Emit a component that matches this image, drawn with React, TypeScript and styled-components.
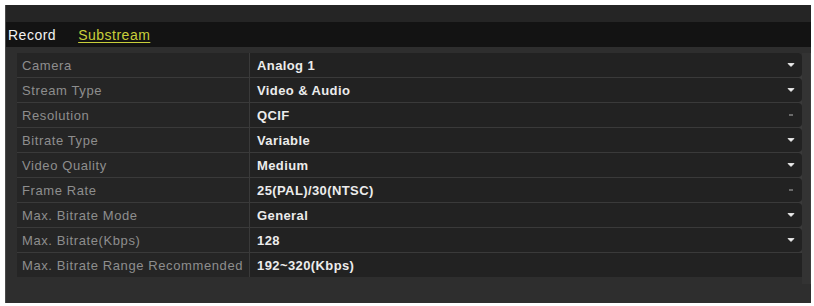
import React from "react";
import styled, { createGlobalStyle } from "styled-components";

const GlobalStyle = createGlobalStyle`
  html, body {
    margin: 0;
    padding: 0;
    background: #ffffff;
  }
  body {
    font-family: "Liberation Sans", Arial, sans-serif;
  }
`;

type Field = {
  label: string;
  value: string;
  arrow?: "on" | "off";
};

const fields: Field[] = [
  { label: "Camera", value: "Analog 1", arrow: "on" },
  { label: "Stream Type", value: "Video & Audio", arrow: "on" },
  { label: "Resolution", value: "QCIF", arrow: "off" },
  { label: "Bitrate Type", value: "Variable", arrow: "on" },
  { label: "Video Quality", value: "Medium", arrow: "on" },
  { label: "Frame Rate", value: "25(PAL)/30(NTSC)", arrow: "off" },
  { label: "Max. Bitrate Mode", value: "General", arrow: "on" },
  { label: "Max. Bitrate(Kbps)", value: "128", arrow: "on" },
  { label: "Max. Bitrate Range Recommended", value: "192~320(Kbps)" },
];

function Arrow({ state }: { state: "on" | "off" }) {
  if (state === "off") {
    return (
      <ArrowBox>
        <svg width="8" height="6" viewBox="0 0 8 6">
          <path d="M2 3h4" stroke="#8a8a8a" strokeWidth="1.4" />
        </svg>
      </ArrowBox>
    );
  }
  return (
    <ArrowBox>
      <svg width="8" height="6" viewBox="0 0 8 6">
        <path d="M1 1.5l3 3 3-3z" fill="#f0f0f0" stroke="#f0f0f0" strokeWidth="0.8" strokeLinejoin="round" />
      </svg>
    </ArrowBox>
  );
}

export default function App() {
  return (
    <>
      <GlobalStyle />
      <Frame>
        <TitleBar />
        <TabBar>
          <Tab>Record</Tab>
          <Tab active>Substream</Tab>
        </TabBar>
        <Panel>
          <Rows>
            {fields.map((f) => (
              <Row key={f.label}>
                <Label>{f.label}</Label>
                <Value select={!!f.arrow}>
                  <span>{f.value}</span>
                  {f.arrow && <Arrow state={f.arrow} />}
                </Value>
              </Row>
            ))}
          </Rows>
          <Gutter />
        </Panel>
      </Frame>
    </>
  );
}

const Frame = styled.div`
  margin: 5px 3px 0 5px;
  height: 298px;
  background: #2f2f2f;
  display: flex;
  flex-direction: column;
  border-left: 1px solid #4a4a4a;
`;

const TitleBar = styled.div`
  height: 17px;
  background: #252525;
`;

const TabBar = styled.div`
  height: 25px;
  background: #131313;
  display: flex;
  align-items: center;
  gap: 22px;
  padding-left: 2px;
`;

const Tab = styled.span<{ active?: boolean }>`
  font-size: 14px;
  color: ${(p) => (p.active ? "#c9cf3a" : "#f2f2f2")};
  text-decoration: ${(p) => (p.active ? "underline" : "none")};
  text-underline-offset: 2px;
  letter-spacing: 0.5px;
`;

const Panel = styled.div`
  flex: 1;
  display: flex;
  padding: 6px 0 0 11px;
  background: #2e2e2e;
`;

const Rows = styled.div`
  flex: 1;
  display: flex;
  flex-direction: column;
  align-self: flex-start;
  background: #3a3a3a;
  gap: 1px;
  border-radius: 0 4px 4px 0;
`;

const Gutter = styled.div`
  width: 8px;
  background: #333333;
  border-right: 1px solid #3e3e3e;
  height: 231px;
`;

const Row = styled.div`
  display: grid;
  grid-template-columns: 233px 1fr;
  height: 24px;
`;

const Label = styled.div`
  background: #252525;
  color: #8e8e8e;
  font-size: 13px;
  letter-spacing: 0.6px;
  display: flex;
  align-items: center;
  padding-left: 5px;
  border-right: 1px solid #3a3a3a;
  white-space: nowrap;
  overflow: hidden;
`;

const Value = styled.div<{ select?: boolean }>`
  background: #222222;
  color: #ececec;
  font-size: 13px;
  font-weight: bold;
  letter-spacing: 0.4px;
  display: flex;
  align-items: center;
  justify-content: space-between;
  padding: 0 6px 0 7px;
  border-radius: ${(p) => (p.select ? "0 4px 4px 0" : "0")};
`;

const ArrowBox = styled.span`
  display: flex;
  align-items: center;
  justify-content: center;
  width: 10px;
`;
